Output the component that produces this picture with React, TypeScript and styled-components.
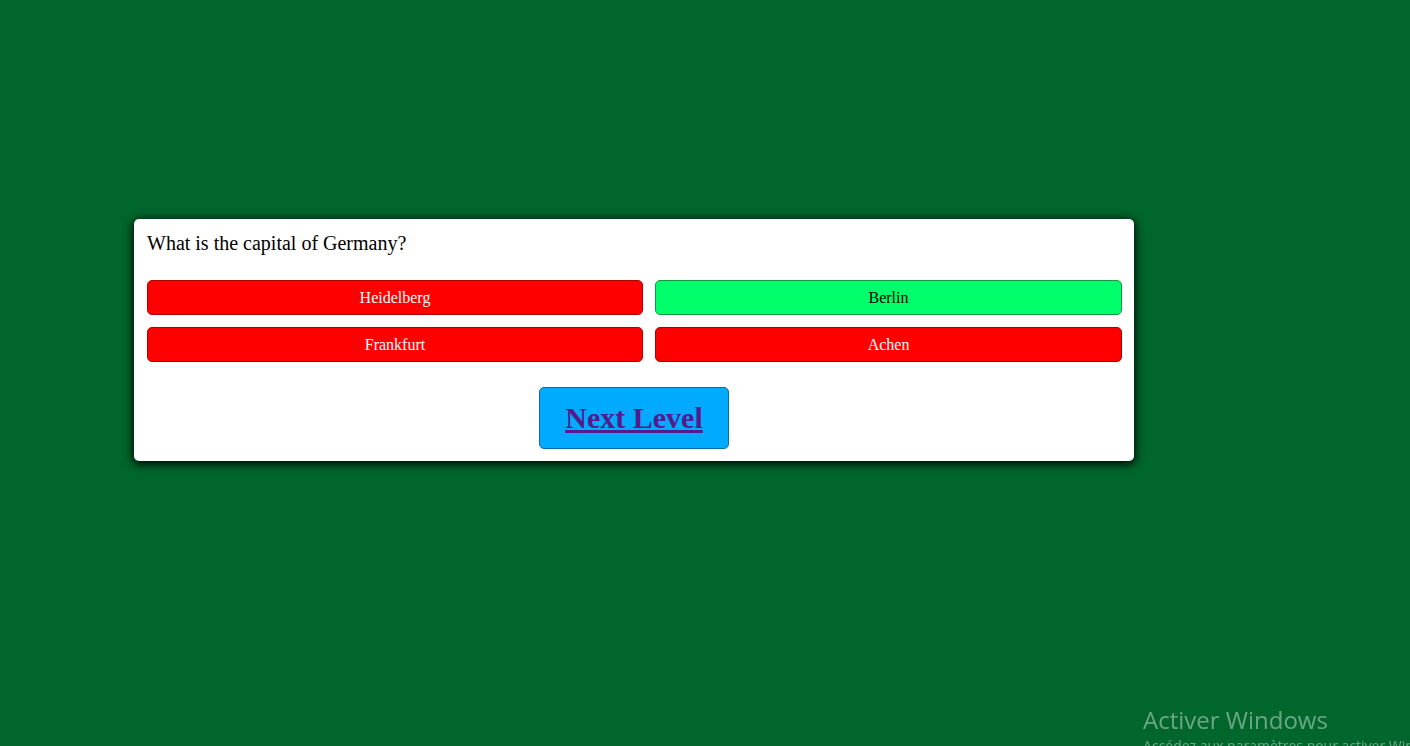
import React from "react";
import styled, { createGlobalStyle } from "styled-components";

const GlobalStyle = createGlobalStyle`
  html, body {
    margin: 0;
    padding: 0;
    background: #00662b;
    font-family: "Liberation Serif", "Times New Roman", serif;
    overflow: hidden;
  }
`;

const Page = styled.div`
  width: 100%;
  height: 746px;
  box-sizing: border-box;
  padding: 219px 0 0 134px;
`;

const Card = styled.div`
  width: 1000px;
  box-sizing: border-box;
  background: #ffffff;
  border-radius: 5px;
  padding: 13px 12px 12px 13px;
  box-shadow: 0 2px 10px 1px #000;
`;

const Question = styled.div`
  font-size: 20px;
  line-height: 23px;
  color: #000;
  margin-bottom: 25px;
`;

const Answers = styled.div`
  display: grid;
  grid-template-columns: auto auto;
  gap: 12px;
`;

const Answer = styled.button<{ $correct?: boolean }>`
  height: 35px;
  border-radius: 5px;
  border: 1px solid ${(p) => (p.$correct ? "#0d9a45" : "#b00000")};
  background: ${(p) => (p.$correct ? "#00ff6a" : "#ff0000")};
  color: ${(p) => (p.$correct ? "#000" : "#fff")};
  font-family: "Liberation Serif", "Times New Roman", serif;
  font-size: 16px;
  padding: 0 10px;
  cursor: pointer;
`;

const Footer = styled.div`
  display: flex;
  justify-content: center;
  margin-top: 25px;
  padding-right: 1px;
`;

const NextButton = styled.button`
  width: 190px;
  height: 62px;
  border-radius: 5px;
  border: 1px solid #0a6fa6;
  background: #00aaff;
  font-family: "Liberation Serif", "Times New Roman", serif;
  padding: 0;
  cursor: pointer;
`;

const NextLink = styled.a`
  font-size: 30px;
  font-weight: bold;
  color: #551a8b;
  text-decoration: underline;
`;

const Watermark = styled.div`
  position: fixed;
  left: 1143px;
  top: 704px;
  color: rgba(255, 255, 255, 0.42);
  font-family: "Open Sans", "Noto Sans", sans-serif;
  white-space: nowrap;
`;

const WatermarkTitle = styled.div`
  font-size: 24px;
  line-height: 32px;
`;

const WatermarkSub = styled.div`
  font-size: 14px;
  line-height: 20px;
`;

const answers = [
  { label: "Heidelberg", correct: false },
  { label: "Berlin", correct: true },
  { label: "Frankfurt", correct: false },
  { label: "Achen", correct: false },
];

export default function App() {
  return (
    <>
      <GlobalStyle />
      <Page>
        <Card>
          <Question>What is the capital of Germany?</Question>
          <Answers>
            {answers.map((a) => (
              <Answer key={a.label} $correct={a.correct}>
                {a.label}
              </Answer>
            ))}
          </Answers>
          <Footer>
            <NextButton>
              <NextLink href="#">Next Level</NextLink>
            </NextButton>
          </Footer>
        </Card>
      </Page>
      <Watermark>
        <WatermarkTitle>Activer Windows</WatermarkTitle>
        <WatermarkSub>Accédez aux paramètres pour activer Windows.</WatermarkSub>
      </Watermark>
    </>
  );
}
